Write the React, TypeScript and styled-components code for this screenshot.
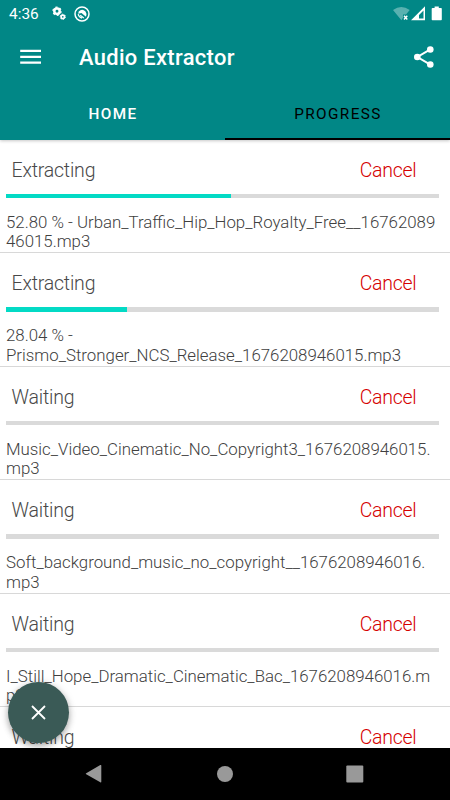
import React from "react";
import styled, { createGlobalStyle } from "styled-components";

const GlobalStyle = createGlobalStyle`
  * { box-sizing: border-box; }
  body { margin: 0; background: #fff; font-family: Roboto, "Liberation Sans", sans-serif; }
  button { font: inherit; border: 0; padding: 0; background: none; cursor: pointer; }
`;

const Screen = styled.div`
  position: relative;
  width: 450px;
  height: 800px;
  display: flex;
  flex-direction: column;
  overflow: hidden;
  background: #fff;
`;

const Header = styled.header`
  flex: none;
  height: 140px;
  display: flex;
  flex-direction: column;
  background: #018786;
  color: #fff;
  z-index: 1;
  box-shadow: 0 1px 3px rgba(0, 0, 0, 0.22);
`;

const StatusBar = styled.div`
  height: 27px;
  display: flex;
  justify-content: space-between;
  padding: 0 7px 0 9px;
`;

const StatusGroup = styled.div`
  display: flex;
  align-items: center;
`;

const Clock = styled.span`
  width: 43px;
  font-size: 15.4px;
  line-height: 28px;
`;

const RadarSlot = styled.span`
  display: flex;
  margin-left: 7px;
`;

const Toolbar = styled.div`
  height: 60px;
  display: flex;
  align-items: center;
  padding: 0 15px 0 20px;
`;

const IconButton = styled.button`
  display: flex;
  color: #fff;
`;

const AppTitle = styled.h1`
  flex: 1;
  margin: 2px 0 0 37px;
  font-size: 21.9px;
  line-height: 26px;
  font-weight: 500;
  letter-spacing: 0.33px;
`;

const Tabs = styled.nav`
  flex: 1;
  display: flex;
`;

const Tab = styled.button<{ $active?: boolean }>`
  flex: 1;
  height: 53px;
  && { font-size: 15.3px; font-weight: ${(p) => (p.$active ? 400 : 500)}; }
  letter-spacing: ${(p) => (p.$active ? "1.42px" : "1.37px")};
  padding: 3px 0 0 1px;
  text-align: center;
  color: ${(p) => (p.$active ? "#000" : "#fff")};
  border-bottom: 2px solid ${(p) => (p.$active ? "#000" : "transparent")};
`;

const List = styled.main`
  flex: 1;
  min-height: 0;
  overflow: hidden;
`;

const Row = styled.section`
  height: 113.4px;
  padding: 18px 11px 0 6px;
  border-bottom: 1px solid #d8d8d8;
`;

const RowHead = styled.div`
  display: flex;
  justify-content: space-between;
  height: 36px;
  padding: 0 22.5px 0 5.5px;
  font-size: 19.5px;
  font-weight: 300;
  line-height: 26.6px;
  letter-spacing: -0.2px;
`;

const Status = styled.span`
  color: #484848;
`;

const Cancel = styled.button`
  height: 26.6px;
  letter-spacing: -0.25px;
  color: #d50000;
`;

const Track = styled.div`
  height: 4.4px;
  background: #dadada;
`;

const Fill = styled.div`
  height: 100%;
  background: #03dac5;
`;

const FileName = styled.p`
  margin: 14.6px -3px 0 0;
  font-size: 16.84px;
  font-weight: 300;
  line-height: 19.4px;
  color: #404040;
  white-space: pre;
`;

const CloseFab = styled.button`
  position: absolute;
  left: 8px;
  top: 682px;
  z-index: 2;
  width: 61px;
  height: 61px;
  border-radius: 50%;
  display: flex;
  align-items: center;
  justify-content: center;
  && { background: #3a5a56; }
  box-shadow: 0 3px 6px rgba(0, 0, 0, 0.28), 0 1px 10px rgba(0, 0, 0, 0.12);
`;

const NavBar = styled.footer`
  flex: none;
  height: 52.5px;
  display: flex;
  align-items: center;
  justify-content: center;
  gap: 106px;
  background: #000;
  z-index: 1;
`;

const jobs = [
  { status: "Extracting", progress: 52.0, name: "52.80 % - Urban_Traffic_Hip_Hop_Royalty_Free__16762089\n46015.mp3" },
  { status: "Extracting", progress: 28.0, name: "28.04 % -\nPrismo_Stronger_NCS_Release_1676208946015.mp3" },
  { status: "Waiting", progress: 0, name: "Music_Video_Cinematic_No_Copyright3_1676208946015.\nmp3" },
  { status: "Waiting", progress: 0, name: "Soft_background_music_no_copyright__1676208946016.\nmp3" },
  { status: "Waiting", progress: 0, name: "I_Still_Hope_Dramatic_Cinematic_Bac_1676208946016.m\np3" },
  { status: "Waiting", progress: 0, name: "" },
];

const GearsIcon = () => (
  <svg width="15" height="15" viewBox="0 0 15 15" fill="none" stroke="#fff">
    <circle cx="5" cy="5.2" r="2.7" strokeWidth="2.5" />
    <circle cx="5" cy="5.2" r="4.1" strokeWidth="1.2" strokeDasharray="2.15 2.15" />
    <circle cx="10.8" cy="10.8" r="1.7" strokeWidth="1.7" />
    <circle cx="10.8" cy="10.8" r="2.6" strokeWidth="1" strokeDasharray="1.36 1.36" />
  </svg>
);

const RadarIcon = () => (
  <svg width="16" height="16" viewBox="0 0 16 16" fill="none" stroke="#fff">
    <circle cx="8" cy="8" r="7" strokeWidth="1.5" />
    <path d="M4.7 5.4Q8.2 2.1 11.5 5.4 13.4 8 12 10.8L7.5 6.9 4.2 7.7Z" fill="#fff" stroke="none" />
    <path d="M4.2 8.2Q4.7 11.3 8 12.1M6.2 9.1 9.8 12" strokeWidth="1.2" />
  </svg>
);

const SignalIcons = () => (
  <svg width="50" height="18" viewBox="0 0 50 18">
    <path d="M0 5Q8.3-1 16.7 5L13 9.5H10V12.8L8.4 15.3Z" fill="#fff" opacity=".35" />
    <path d="m11 10.7 3.3 3.8m0-3.8L11 14.5" stroke="#fff" strokeWidth="1.4" />
    <path fillRule="evenodd" d="M32 1.2V15.2H18ZM30.5 5.5V13.6H26V9.9Z" fill="#fff" />
    <path d="M39.4 3h2.2V1.5h4.2V3h2.3q.7 0 .7.7v10.8q0 .8-.7.8h-8.7q-.7 0-.7-.8V3.7q0-.7.9-.7Z" fill="#fff" />
  </svg>
);

const MenuIcon = () => (
  <svg width="22" height="16" viewBox="0 0 22 16" stroke="#fff" strokeWidth="2.3">
    <path d="M.2 1.8h20.8M.2 7.8h20.8M.2 13.7h20.8" />
  </svg>
);

const ShareIcon = () => (
  <svg width="22" height="24" viewBox="0 0 22 24" fill="#fff">
    <path d="M17.3 4.3 4.4 12 17.3 19.6" fill="none" stroke="#fff" strokeWidth="2" />
    <circle cx="17.3" cy="4.5" r="3.3" />
    <circle cx="4.3" cy="12" r="3.3" />
    <circle cx="17.3" cy="19.5" r="3.3" />
  </svg>
);

export default function App() {
  return (
    <>
      <GlobalStyle />
      <Screen>
        <Header>
          <StatusBar>
            <StatusGroup>
              <Clock>4:36</Clock>
              <GearsIcon />
              <RadarSlot><RadarIcon /></RadarSlot>
            </StatusGroup>
            <StatusGroup><SignalIcons /></StatusGroup>
          </StatusBar>
          <Toolbar>
            <IconButton aria-label="Menu"><MenuIcon /></IconButton>
            <AppTitle>Audio Extractor</AppTitle>
            <IconButton aria-label="Share"><ShareIcon /></IconButton>
          </Toolbar>
          <Tabs>
            <Tab>HOME</Tab>
            <Tab $active>PROGRESS</Tab>
          </Tabs>
        </Header>
        <List>
          {jobs.map((job, i) => (
            <Row key={i}>
              <RowHead>
                <Status>{job.status}</Status>
                <Cancel>Cancel</Cancel>
              </RowHead>
              <Track><Fill style={{ width: `${job.progress}%` }} /></Track>
              <FileName>{job.name}</FileName>
            </Row>
          ))}
        </List>
        <CloseFab aria-label="Close">
          <svg width="15" height="15" viewBox="0 0 15 15" stroke="#fff" strokeWidth="1.8">
            <path d="m1 1 13 13M14 1 1 14" />
          </svg>
        </CloseFab>
        <NavBar>
          <svg width="24" height="20" viewBox="0 0 24 20" fill="#999">
            <path d="M18.3 1.6v16.2q0 1-1 .5L3.2 10.3q-1-.5 0-1.1L17.3 1.1q1-.5 1 .5Z" />
          </svg>
          <svg width="24" height="20" viewBox="0 0 24 20" fill="#999"><circle cx="12" cy="10" r="8" /></svg>
          <svg width="24" height="20" viewBox="0 0 24 20" fill="#999"><rect x="3.3" y="1.5" width="17" height="17" rx="1" /></svg>
        </NavBar>
      </Screen>
    </>
  );
}
